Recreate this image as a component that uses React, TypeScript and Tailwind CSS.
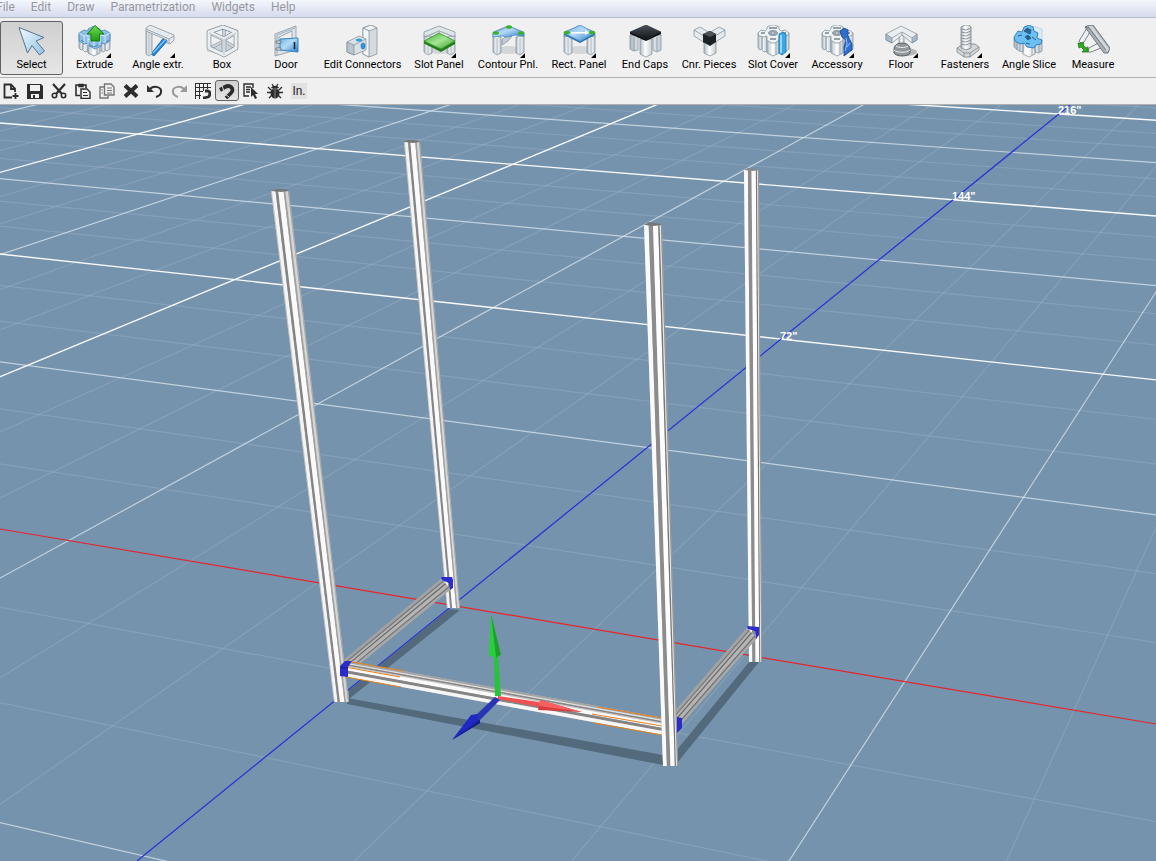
import React, { useState } from 'react';
import clsx from 'clsx';

type Point = [number, number];

const pts = (list: Point[]) => list.map((p) => p.join(',')).join(' ');

/* ---------- Large toolbar icons ---------- */

const edge = { stroke: '#7b8a95', strokeWidth: 0.7, strokeLinejoin: 'round' as const };

const Defs = () => (
    <svg width="0" height="0" className="absolute" aria-hidden="true">
        <defs>
            <linearGradient id="steel" x1="0" x2="1">
                <stop offset="0" stopColor="#aebac3" />
                <stop offset="0.45" stopColor="#ffffff" />
                <stop offset="1" stopColor="#c3cdd4" />
            </linearGradient>
            <linearGradient id="ice" x1="0" y1="0" x2="1" y2="1">
                <stop offset="0" stopColor="#f4faff" />
                <stop offset="1" stopColor="#8fc3e6" />
            </linearGradient>
            <linearGradient id="blue" x1="0" y1="0" x2="1" y2="1">
                <stop offset="0" stopColor="#6fb2e8" />
                <stop offset="0.45" stopColor="#b4daf5" />
                <stop offset="1" stopColor="#2a79cc" />
            </linearGradient>
            <linearGradient id="green" x1="0" y1="0" x2="1" y2="1">
                <stop offset="0" stopColor="#3fae2c" />
                <stop offset="0.5" stopColor="#a6e596" />
                <stop offset="1" stopColor="#2f9c1f" />
            </linearGradient>
            <linearGradient id="leaf" x1="0" y1="0" x2="0" y2="1">
                <stop offset="0" stopColor="#6fe04a" />
                <stop offset="1" stopColor="#1f9a14" />
            </linearGradient>
            <linearGradient id="ink" x1="0" y1="0" x2="0" y2="1">
                <stop offset="0" stopColor="#4a525a" />
                <stop offset="1" stopColor="#12161a" />
            </linearGradient>
        </defs>
    </svg>
);

const Columns = () => (
    <g {...edge}>
        <path d="M1 8h4v16l-2 1-2-2zM5 9h5v17l-3 1-2-2z" fill="url(#steel)" />
        <path d="M23 9h4v17l-2 1-2-1zM27 8h5v16l-3 2-2-1z" fill="url(#steel)" />
        <path d="M10 14h12v14l-6 3-6-3z" fill="url(#steel)" />
        <path d="M19 16v13" fill="none" />
    </g>
);

const Profile = () => (
    <g {...edge}>
        <Columns />
        <path
            d="M1 8l3-3 4 1 2-2V2l4-2h4l4 2v2l2 2 4-1 4 3-2 3-5 1-3-1v4l-4 3h-4l-4-3v-4l-3 1-5-1z"
            fill="#eef2f4"
        />
        <ellipse cx="16" cy="8" rx="4.5" ry="2.500" fill="#9ba8b1" />
        <ellipse cx="16" cy="8" rx="1.800" ry="1" fill="#f4f6f7" />
        <path d="M12 3h8M4 8h4M25 8h4M13 14h6" stroke="#76858f" strokeWidth="1.500" />
    </g>
);

const Table = () => (
    <g {...edge}>
        <ellipse cx="17" cy="25" rx="12" ry="4" fill="#d4d7d9" stroke="none" />
        <path d="M1 7l15-6 16 6v5l-16-6-15 6z" fill="#dfe6ea" />
        <path d="M1 11l8 1v16l-4 2-4-3z" fill="url(#steel)" />
        <path d="M24 12l8-1v16l-4 3-4-2z" fill="url(#steel)" />
        <path d="M5 13v16M28 13v16" fill="none" />
    </g>
);

const cubeBack = 'M4 23l14-7 12 7M18 3v14';
const cubeFront = 'M3 7l14-5 13 5-12 7zM3 7v16l15 7 12-7V7M18 14v16';

const art: Record<string, React.ReactNode> = {
    Select: (
        <path d="M4 2.500L29 12.500 21 16l8.500 10-5 4L17 20.500 12.500 28z" fill="url(#ice)" stroke="#56758d" />
    ),
    Extrude: (
        <>
            <Columns />
            <path
                d="M1 8l5-3 4 1V4l6-3 6 3v2l5-1 5 3v8l-5 3-4-1v3l-6 3-6-3v-3l-5 1-5-3z"
                fill="#7db9e8"
                fillOpacity="0.85"
                stroke="#3c7fb4"
                strokeWidth="0.7"
            />
            <path
                d="M1 8l5 3 4-1v4l6 3 6-3v-4l5 1 5-3M6 11v7M27 11v7M10 14v6M22 14v6M16 17v6"
                fill="none"
                stroke="#dff0fc"
                strokeWidth="0.9"
            />
            <path d="M3 15l3 2M28 17l3-2M12 20l4 2 4-2" stroke="#2f6fa6" strokeWidth="0.8" fill="none" />
            <path d="M17 0.500L9 9h4v7h8.500V9H26z" fill="url(#leaf)" stroke="#17780e" />
        </>
    ),
    'Angle extr.': (
        <>
            <path d="M9 29L23 11l4 3-15 17z" fill="#1c86e0" stroke="#145c9c" strokeWidth="0.8" />
            <path d="M11 28L25 13" stroke="#8ac8ff" strokeWidth="1.200" />
            <g {...edge}>
                <path d="M4 5l3-1 3 2v23l-3 2-3-2z" fill="url(#steel)" />
                <path d="M7 7v23" fill="none" />
                <path d="M4 3l4-3 24 10v5l-4 4-3-1V15L4 6z" fill="#e4eaee" />
                <path d="M4 4l23 10 5-3M27 14v4" fill="none" />
            </g>
        </>
    ),
    Box: (
        <g fill="none" strokeLinejoin="round">
            <path d="M0 26l16-8 14 6-12 7z" fill="#d0d3d5" />
            <path d={cubeBack} stroke="#8f9ca5" strokeWidth="3.6" />
            <path d={cubeBack} stroke="#cbd3d8" strokeWidth="2.4" />
            <path d={cubeFront} stroke="#7b8a95" strokeWidth="4.6" />
            <path d={cubeFront} stroke="#e9eef1" strokeWidth="3.2" />
            <path d="M3 8l15 7 12-7M18 15v15" stroke="#a3b0b9" strokeWidth="0.7" />
        </g>
    ),
    Door: (
        <>
            <path d="M5 9L26 1v24L5 31zM9 12v13l13-4V6z" fill="#dce4e9" fillRule="evenodd" {...edge} />
            <path d="M7 10v20M7 10l18-7" stroke="#8896a0" strokeWidth="0.7" />
            <path d="M10 14l18-1v14l-18-2z" fill="url(#blue)" stroke="#3185c6" />
            <path d="M6 16h5v2H6zM6 23h5v2H6z" fill="#f8fafb" stroke="#53626e" strokeWidth="0.8" />
            <path d="M24.500 17v7" stroke="#10202c" strokeWidth="1.500" />
        </>
    ),
    'Edit Connectors': (
        <>
            <g {...edge}>
                <path d="M17 3l8-3 6 3v26l-8 3-6-3z" fill="#d3dbe1" />
                <path d="M17 3l8-3 6 3-8 3z" fill="#f1f4f6" />
                <path d="M17 3l6 3v26l-6-3z" fill="#f4f7f8" />
                <path d="M1 17l12-6 7 3v11L8 30l-7-3z" fill="#dbe2e7" />
                <path d="M1 17l7 3v10l-7-3z" fill="#b9c5cd" />
                <path d="M8 20l12-6" fill="none" />
            </g>
            <ellipse cx="13" cy="15" rx="3" ry="1.500" fill="#2b9be6" />
            <ellipse cx="17" cy="21" rx="2" ry="3" fill="#2b9be6" stroke="#14639e" strokeWidth="0.600" />
        </>
    ),
    'Slot Panel': (
        <>
            <Table />
            <path d="M2 13l14-7v6M31 12L16 6" stroke="#a4b2bc" fill="none" />
            <path d="M1 16v2.500l17 8.500 14-8v-3l-14 8z" fill="#227c18" />
            <path d="M1 16l15-8 16 8-14 8z" fill="url(#green)" stroke="#2a8f1e" strokeWidth="0.800" />
        </>
    ),
    'Contour Pnl.': (
        <>
            <Table />
            <path d="M13 12l7-1-4 5-6 4v-5z" fill="#c4cdd4" {...edge} />
            <path d="M1 8L17 1l15 7v3l-9-1-7 2-6-1-9 1z" fill="url(#blue)" stroke="#478fc5" strokeWidth="0.800" />
            <ellipse cx="4" cy="8" rx="3" ry="1.800" fill="#35b526" />
            <ellipse cx="17" cy="2" rx="3" ry="1.800" fill="#35b526" />
            <ellipse cx="29" cy="8" rx="3" ry="1.800" fill="#35b526" />
        </>
    ),
    'Rect. Panel': (
        <>
            <Table />
            <path d="M1 8v2l16 8 15-8V8l-15 8z" fill="#2673b3" />
            <path d="M1 8l16-8 15 8-15 8z" fill="url(#blue)" stroke="#478fc5" strokeWidth="0.800" />
            <path d="M8 7h14V5l5 2.500-5 2.500V8.500H8z" fill="#fff" />
            <ellipse cx="4" cy="7.500" rx="3" ry="1.800" fill="#35b526" />
            <ellipse cx="29" cy="7.500" rx="3" ry="1.800" fill="#35b526" />
        </>
    ),
    'End Caps': (
        <>
            <g {...edge}>
                <path d="M1 10h8v15l-4 1-4-2zM24 10h8v15l-4 2-4-2z" fill="url(#steel)" />
                <path d="M5 12v14M28 12v14" fill="none" />
                <path d="M11 14h12v15l-6 3-6-3z" fill="url(#steel)" />
            </g>
            <path d="M1 7v2l16 7 15-7V7z" fill="#0f1316" />
            <path d="M1 7l16-7 15 7-15 7z" fill="url(#ink)" stroke="#20262b" strokeWidth="0.600" />
        </>
    ),
    'Cnr. Pieces': (
        <>
            <g {...edge}>
                <path d="M1 5l6-3 10 6v8l-5 2L1 11z" fill="#e4eaee" />
                <path d="M1 5l10 6 6-3M11 11v7" fill="none" />
                <path d="M32 5l-6-3-10 6v8l5 2 11-7z" fill="#e4eaee" />
                <path d="M32 5l-10 6-6-3M22 11v7" fill="none" />
                <path d="M11 16h12v12l-6 3-6-3z" fill="url(#steel)" />
            </g>
            <path d="M10 9l7-3 6 3v8l-6 4-7-4z" fill="#1c2125" />
            <path d="M10 9l7-3 6 3-6 3z" fill="#4c545b" />
        </>
    ),
    'Slot Cover': (
        <>
            <Profile />
            <path d="M22 9l4-2 3 2v18l-4 3-3-2z" fill="#38a9e8" stroke="#1b6fa8" strokeWidth="0.800" />
            <path d="M24 10v18" stroke="#b7e6ff" strokeWidth="1.500" />
        </>
    ),
    Accessory: (
        <>
            <Profile />
            <path d="M19 6l4-3 4 2v6l4 8v6l-8 6v-9l2-7-4-3z" fill="#2e6fcb" stroke="#16408a" strokeWidth="0.800" />
            <path d="M25 13l1 6-2 7M29 18l-3 4" stroke="#8fc2ff" fill="none" />
        </>
    ),
    Floor: (
        <>
            <ellipse cx="21" cy="27" rx="11" ry="4" fill="#b4b8bb" />
            <path d="M14 9h5v12h-5z" fill="url(#steel)" {...edge} />
            <path d="M9 24c0-4 4-6 8-6s8 2 8 6v4c-2 4-14 4-16 0z" fill="#90979d" stroke="#454c52" strokeWidth="0.800" />
            <path d="M9 25c3 3 13 3 16 0M11 21c3 2 9 2 12 0" fill="none" stroke="#eef1f3" />
            <g {...edge}>
                <path d="M1 9l15-8 16 8v6l-5 3-10-8-10 8-6-3z" fill="#e8eef1" />
                <path d="M1 9l6 4v5l-6-3zM32 9l-5 4v5l5-3z" fill="#a9bac6" />
                <path d="M7 13l10-6 10 6M17 7v4" fill="none" />
            </g>
        </>
    ),
    Fasteners: (
        <g stroke="#858d93" strokeWidth="0.900">
            <path d="M8 23l7-4h11l4 3v3l-9 7h-6l-7-5z" fill="#d3d7da" />
            <path d="M8 23l7 5h6l9-6M15 28v4M21 28v4" fill="none" />
            <path d="M12 2l4-2h4l2 2v21l-5 2-5-2z" fill="url(#steel)" />
            <path d="M12 4l5 1 5-2M12 7l5 1 5-2M12 10l5 1 5-2M12 13l5 1 5-2M12 16l5 1 5-2M12 19l5 1 5-2" fill="none" />
        </g>
    ),
    'Angle Slice': (
        <>
            <g {...edge}>
                <path d="M1 13h9v14l-4-1-5-4zM10 18h12v11l-6 3-6-3zM22 15h7v11l-3 2-4-1z" fill="url(#steel)" />
                <path d="M4 15v10M7 16v10M19 20v10M26 17v10" fill="none" />
            </g>
            <path d="M20 1l9 3v12l-7 3z" fill="#dbeaf5" stroke="#b5cbdc" strokeWidth="0.700" />
            <path
                d="M1 12l4-6 4 1 2-5 5-2 4 2 1 4 4 2-1 5 5 2-1 4-5 1-2 3-7-1-3-4-4 1-5-3z"
                fill="#6cbff2"
                stroke="#216ea8"
                strokeWidth="0.800"
            />
            <path d="M11 6l3-3 4 2-1 4zM5 11l4-1M19 12l4 3M12 12l3-2 3 3-3 2zM13 18l4 1" fill="#28628f" stroke="#28628f" />
        </>
    ),
    Measure: (
        <g stroke="#5c666d" strokeWidth="0.800">
            <path d="M10 3L2 16l2 2 3-1 6-10zM25 16L12 23l-1 4 3 0 15-6z" fill="#eef0f1" />
            <path d="M8 2l4-2h4l17 23-2 5h-4z" fill="#aab0b5" />
            <path d="M12 1h3l17 23-2 3z" fill="#d4d8da" stroke="none" />
            <path d="M8 2l4 1 17 22" fill="none" />
            <path d="M1 18l6 0-1 2 3 3 2-1v5H5l2-2-3-3-2 1z" fill="#2cae21" stroke="#187a10" />
        </g>
    ),
};

interface Tool {
    label: string;
    width: string;
    menu?: boolean;
}

const tools: Tool[] = [
    { label: 'Select', width: 'w-[63px]' },
    { label: 'Extrude', width: 'w-[63px]', menu: true },
    { label: 'Angle extr.', width: 'w-16', menu: true },
    { label: 'Box', width: 'w-16' },
    { label: 'Door', width: 'w-16' },
    { label: 'Edit Connectors', width: 'w-[89px]' },
    { label: 'Slot Panel', width: 'w-16', menu: true },
    { label: 'Contour Pnl.', width: 'w-[74px]', menu: true },
    { label: 'Rect. Panel', width: 'w-[68px]', menu: true },
    { label: 'End Caps', width: 'w-16' },
    { label: 'Cnr. Pieces', width: 'w-16' },
    { label: 'Slot Cover', width: 'w-16', menu: true },
    { label: 'Accessory', width: 'w-16', menu: true },
    { label: 'Floor', width: 'w-16', menu: true },
    { label: 'Fasteners', width: 'w-16', menu: true },
    { label: 'Angle Slice', width: 'w-16' },
    { label: 'Measure', width: 'w-16' },
];

/* ---------- Small toolbar icons ---------- */

const small: { name: string; icon: React.ReactNode }[] = [
    {
        name: 'New',
        icon: (
            <>
                <path d="M9 14.500H1.500V1.500H8l4 4V9" fill="none" strokeWidth="1.800" />
                <path d="M8 1.500V6h4M12.500 10v6M9.500 13h6" fill="none" strokeWidth="1.800" />
            </>
        ),
    },
    {
        name: 'Save',
        icon: (
            <>
                <path d="M0 1h14l2 2v13H0z" fill="#2d2d2d" stroke="none" />
                <path d="M3 2h10v6H3z" fill="#f0f0f0" stroke="none" />
                <path d="M4 11h8v4H4z" fill="#f0f0f0" stroke="none" />
                <path d="M6 12h2v3H6z" fill="#2d2d2d" stroke="none" />
            </>
        ),
    },
    {
        name: 'Cut',
        icon: (
            <>
                <path d="M2 1l9 10M14 1L5 11" strokeWidth="2.200" fill="none" />
                <circle cx="3.500" cy="12.500" r="2.200" fill="none" strokeWidth="1.600" />
                <circle cx="12.500" cy="12.500" r="2.200" fill="none" strokeWidth="1.600" />
            </>
        ),
    },
    {
        name: 'Paste',
        icon: (
            <>
                <path d="M5 12.500H1V2h10v3M4 1.500h4v2H4z" fill="none" strokeWidth="1.600" />
                <path d="M6 6h6l3 3v6.500H6z" fill="#f0f0f0" strokeWidth="1.400" />
                <path d="M8 9.500h4M8 12.500h5" strokeWidth="1.200" />
            </>
        ),
    },
    {
        name: 'Copy',
        icon: (
            <g stroke="#757575">
                <path d="M5 4H1v11h8v-2" fill="none" strokeWidth="1.400" />
                <path d="M5.500 1H12l3 3v8H5.500z" fill="#f0f0f0" strokeWidth="1.400" />
                <path d="M8 5h5M8 7.500h5M8 10h5M2.500 7H4M2.500 10H4" strokeWidth="1.200" />
            </g>
        ),
    },
    { name: 'Delete', icon: <path d="M2 2.500l12 11M14 2.500l-12 11" fill="none" strokeWidth="4" /> },
    {
        name: 'Undo',
        icon: (
            <>
                <path d="M3 6c4-4 12-2 11 3 0 3-2 4-5 5" fill="none" strokeWidth="2" />
                <path d="M0 2v7h7z" fill="#333" stroke="none" />
            </>
        ),
    },
    {
        name: 'Redo',
        icon: (
            <g stroke="#999">
                <path d="M13 6C9 2 1 4 2 9c0 3 2 4 5 5" fill="none" strokeWidth="2" />
                <path d="M16 2v7H9z" fill="#999" stroke="none" />
            </g>
        ),
    },
    {
        name: 'Snap to grid',
        icon: (
            <>
                <path
                    d="M0 .5h16M0 4.500h16M0 8.500h8M0 12.500h6M.5 0v16M4.500 0v16M8.500 0v8M12.500 0v6"
                    strokeWidth="1"
                />
                <path d="M10 8l3 0c3 1 2 5 0 6l-5 1" fill="none" strokeWidth="2.800" />
            </>
        ),
    },
    {
        name: 'Magnet',
        icon: (
            <>
                <path d="M1 7l5-3c5-3 10 2 6 6l-5 5" fill="none" strokeWidth="3.800" />
                <path d="M3 3l2 5M6 11l4 3" stroke="#ddd" strokeWidth="1" />
            </>
        ),
    },
    {
        name: 'Pick from list',
        icon: (
            <>
                <path d="M6 13H1V1h9v4" fill="none" strokeWidth="1.400" />
                <path d="M3 4h5M3 6.500h4M3 9h4" strokeWidth="1.300" />
                <path d="M8 4l7 7h-3l2 4-2 1-2-4-2 2z" fill="#2d2d2d" stroke="none" />
            </>
        ),
    },
    {
        name: 'Report a bug',
        icon: (
            <>
                <path d="M1 4l3 3M15 4l-3 3M0 9.500h16M2 15l3-3M14 15l-3-3M5 1l2 3M11 1L9 4" strokeWidth="1.300" />
                <ellipse cx="8" cy="10" rx="4.500" ry="5.500" fill="#2d2d2d" stroke="none" />
                <path d="M4 5c1-3 7-3 8 0z" fill="#2d2d2d" stroke="none" />
                <path d="M8 7v8M4 6h8" stroke="#999" strokeWidth="0.800" />
            </>
        ),
    },
];

/* ---------- 3D view ---------- */

// Floor coordinates are in units of 72 inches: u runs left along the red axis, v runs away along the blue one.
const project = (u: number, v: number): Point => {
    const w = 1 + 0.1644 * u + 0.4549 * v;
    return [(452.4 - 756 * u + 683.7 * v) / w, (605.2 - 40.6 * u - 111.9 * v) / w];
};

const vanishU: Point = [-4600, -247];
const vanishV: Point = [1503, -246];

const lineStyle = (i: number) => {
    if (i % 6 === 0) return { stroke: '#f8fafc', opacity: 1, width: 1.4, rank: 2 };
    if (i % 3 === 0) return { stroke: '#dce6ee', opacity: 0.75, width: 1.2, rank: 1 };
    return { stroke: '#a6b7d0', opacity: 0.36, width: 1.2, rank: 0 };
};

const range = (from: number, to: number) => Array.from({ length: to - from + 1 }, (_, i) => from + i);

const GridLine = ({ through, vanish, index }: { through: Point; vanish: Point; index: number }) => {
    const dx = through[0] - vanish[0];
    const dy = through[1] - vanish[1];
    const { stroke, opacity, width } = lineStyle(index);
    return (
        <line
            x1={vanish[0] + dx * 0.1}
            y1={vanish[1] + dy * 0.1}
            x2={vanish[0] + dx * 3}
            y2={vanish[1] + dy * 3}
            stroke={stroke}
            opacity={opacity}
            strokeWidth={width}
        />
    );
};

type Strip = [number, number, string];

// A quad split lengthwise into shaded strips: a-b is one end, c-d the other.
const Beam = ({ a, b, c, d, strips }: { a: Point; b: Point; c: Point; d: Point; strips: Strip[] }) => {
    const mix = (p: Point, q: Point, t: number): Point => [p[0] + (q[0] - p[0]) * t, p[1] + (q[1] - p[1]) * t];
    return (
        <g>
            <polygon points={pts([a, b, d, c])} fill="#b5b5b5" />
            {strips.map(([from, to, color]) => (
                <polygon
                    key={from}
                    points={pts([mix(a, b, from), mix(a, b, to), mix(c, d, to), mix(c, d, from)])}
                    fill={color}
                />
            ))}
        </g>
    );
};

const leftPost: Strip[] = [
    [0, 0.05, '#c4c4c4'],
    [0.05, 0.25, '#f4f4f4'],
    [0.25, 0.4, '#858585'],
    [0.4, 0.7, '#fafafa'],
    [0.7, 0.8, '#a0a0a0'],
    [0.8, 0.94, '#d6d6d6'],
    [0.94, 1, '#a8a8a8'],
];

const rightPost: Strip[] = [
    [0, 0.26, '#fafafa'],
    [0.26, 0.5, '#8c8c8c'],
    [0.5, 0.79, '#fdfdfd'],
    [0.79, 0.87, '#777777'],
    [0.87, 0.94, '#e6e6e6'],
    [0.94, 1, '#929292'],
];

const sideRail: Strip[] = [
    [0, 0.18, '#a2a2a2'],
    [0.18, 0.28, '#777777'],
    [0.28, 0.42, '#b2b2b2'],
    [0.42, 0.52, '#686868'],
    [0.52, 0.74, '#b5b5b5'],
    [0.74, 0.84, '#727272'],
    [0.84, 1, '#a8a8a8'],
];

const frontRail: Strip[] = [
    [0, 0.12, '#a4a4a4'],
    [0.12, 0.2, '#e0e0e0'],
    [0.2, 0.29, '#858585'],
    [0.29, 0.36, '#c4c4c4'],
    [0.36, 0.6, '#fafafa'],
    [0.6, 0.78, '#848484'],
    [0.78, 1, '#f6f6f6'],
];

const Viewport = () => (
    <svg
        viewBox="0 105 1156 756"
        preserveAspectRatio="xMidYMid slice"
        className="block h-full w-full bg-[#7593ad]"
        role="img"
        aria-label="3D view of the frame"
    >
        {[0, 1, 2].map((rank) => (
            <g key={rank}>
                {range(-9, 27)
                    .filter((i) => i !== 0 && lineStyle(i).rank === rank)
                    .map((i) => (
                        <GridLine key={`v${i}`} through={project(0, i / 6)} vanish={vanishU} index={i} />
                    ))}
                {range(-8, 22)
                    .filter((i) => i !== 0 && lineStyle(i).rank === rank)
                    .map((i) => (
                        <GridLine key={`u${i}`} through={project(i / 6, 0)} vanish={vanishV} index={i} />
                    ))}
            </g>
        ))}

        {/* Axes */}
        <path d="M0 529L1156 724" stroke="#e8242c" strokeWidth="1.2" />
        <path d="M137 861L1070 105" stroke="#2430dc" strokeWidth="1.2" />

        {/* Shadows */}
        <g fill="#526a7c">
            <polygon points="449,609 460,610 349,699 349,690" />
            <polygon points="347,698 663,755 663,765 347,704" />
            <polygon points="750,661 759,662 677,763 676,751" />
        </g>

        {/* Frame */}
        <Beam a={[404, 142]} b={[420, 142]} c={[447, 608]} d={[460, 608]} strips={leftPost} />
        <path d="M404 142l4-2h8l4 2-7 1z" fill="#777" />
        <Beam a={[744, 170]} b={[759, 170]} c={[749, 662]} d={[762, 662]} strips={rightPost} />
        <path d="M744 170l4-2 10 1 1 1-6 1z" fill="#888" />
        <Beam a={[441, 579]} b={[451, 589]} c={[344, 660]} d={[357, 666]} strips={sideRail} />
        <Beam a={[747, 628]} b={[757, 638]} c={[675, 711]} d={[679, 727]} strips={sideRail} />
        <Beam a={[271, 191]} b={[289, 191]} c={[334, 702]} d={[349, 702]} strips={leftPost} />
        <path d="M271 191l5-2h10l3 2-8 1z" fill="#777" />
        <Beam a={[347, 661]} b={[347, 677]} c={[664, 718]} d={[664, 735]} strips={frontRail} />
        <g stroke="#e5801c" strokeWidth="1">
            <path d="M346 661l58 10M345 667l55 10M346 677l55 10" />
            <path d="M598 707l64 11M592 714l70 12M594 723l68 12" />
        </g>
        <Beam a={[644, 225]} b={[662, 225]} c={[663, 766]} d={[678, 766]} strips={rightPost} />
        <path d="M644 225l5-3 12 2 1 1-8 1z" fill="#777" />
        <g fill="#2b2ccb">
            <polygon points="441,577 452,577 453,580 453,588 450,590 449,583 442,580" />
            <polygon points="340,666 345,661 352,661 348,667 348,677 340,676" />
            <polygon points="747,626 759,627 759,635 756,639 755,631 748,629" />
            <polygon points="677,717 682,718 682,728 677,733" />
        </g>
        <path d="M341 668h7" stroke="#15158c" />

        {/* Move handles */}
        <polygon points="494,655 498,655 501,696 495,696" fill="#27c33a" />
        <polygon points="491,614 489,655 494,658 501,655" fill="#28cf3b" />
        <polygon points="491,614 496,657 501,655" fill="#1f9e2e" />
        <polygon points="498,696 539,702 539,707 498,699" fill="#f05050" />
        <polygon points="540,700 582,712 538,710" fill="#d83c3c" />
        <polygon points="540,700 582,712 539,706" fill="#f86060" />
        <polygon points="495,697 500,700 480,720 475,716" fill="#2a35b4" />
        <polygon points="471,715 477,714 480,723 452,740" fill="#2028c4" />
        <polygon points="480,719 480,723 452,740 470,727" fill="#151d88" />

        {/* Distance marks */}
        <g fill="#ffffff" fontFamily="Liberation Sans, sans-serif" fontWeight="700" fontSize="11">
            <text x="780" y="340">72&quot;</text>
            <text x="952" y="200">144&quot;</text>
            <text x="1058" y="114">216&quot;</text>
        </g>
    </svg>
);

const menus = ['File', 'Edit', 'Draw', 'Parametrization', 'Widgets', 'Help'];

const App = () => {
    const [active, setActive] = useState('Select');
    const [magnet, setMagnet] = useState(true);

    return (
        <div className="flex h-screen flex-col overflow-hidden bg-[#f0f0f0] font-[Roboto,sans-serif] text-black">
            <Defs />

            {/* Menu bar */}
            <nav className="flex h-[18px] shrink-0 items-start gap-4 border-b border-[#b5bac4] bg-linear-to-b from-[#f4f7fc] to-[#d5dbee] text-xs leading-[14px] text-[#98989c]">
                {menus.map((item) => (
                    <button key={item} className="h-[14px] first:-ml-1">
                        {item}
                    </button>
                ))}
            </nav>

            {/* Tools */}
            <div className="flex h-[60px] shrink-0 items-start border-b border-[#b0b0b0] pt-[3px]">
                {tools.map(({ label, width, menu }) => (
                    <button
                        key={label}
                        onClick={() => setActive(label)}
                        className={clsx(
                            'flex h-[54px] shrink-0 flex-col items-center rounded-[3px] border pt-[3px]',
                            width,
                            active === label
                                ? 'border-[#5f6163] bg-linear-to-b from-[#cfcfcf] to-[#e6e6e6]'
                                : 'border-transparent',
                        )}
                    >
                        <svg viewBox="0 0 33 33" className="h-[33px] w-[33px] shrink-0" fill="none">
                            {art[label]}
                            {menu && <path d="M33 28v5h-5z" fill="#000" />}
                        </svg>
                        <span className="text-[11px] leading-[14px] whitespace-nowrap">{label}</span>
                    </button>
                ))}
            </div>

            {/* Quick actions */}
            <div className="-ml-px flex h-[27px] shrink-0 items-center border-b border-[#b0b0b0] pb-px">
                {small.map(({ name, icon }) => (
                    <button
                        key={name}
                        aria-label={name}
                        onClick={() => name === 'Magnet' && setMagnet(!magnet)}
                        className={clsx(
                            'flex h-[21px] w-6 shrink-0 items-center justify-center rounded-[3px] border',
                            name === 'Magnet' && magnet
                                ? 'border-[#5f6163] bg-linear-to-b from-[#cfcfcf] to-[#e6e6e6]'
                                : 'border-transparent',
                        )}
                    >
                        <svg viewBox="0 0 16 16" className="h-4 w-4 shrink-0" fill="none" stroke="#2d2d2d">
                            {icon}
                        </svg>
                    </button>
                ))}
                <button className="ml-1 h-4 w-4 bg-[#e2e2e2] text-xs leading-4 text-[#222]">In.</button>
            </div>

            <main className="min-h-0 flex-1">
                <Viewport />
            </main>
        </div>
    );
};

export default App;
